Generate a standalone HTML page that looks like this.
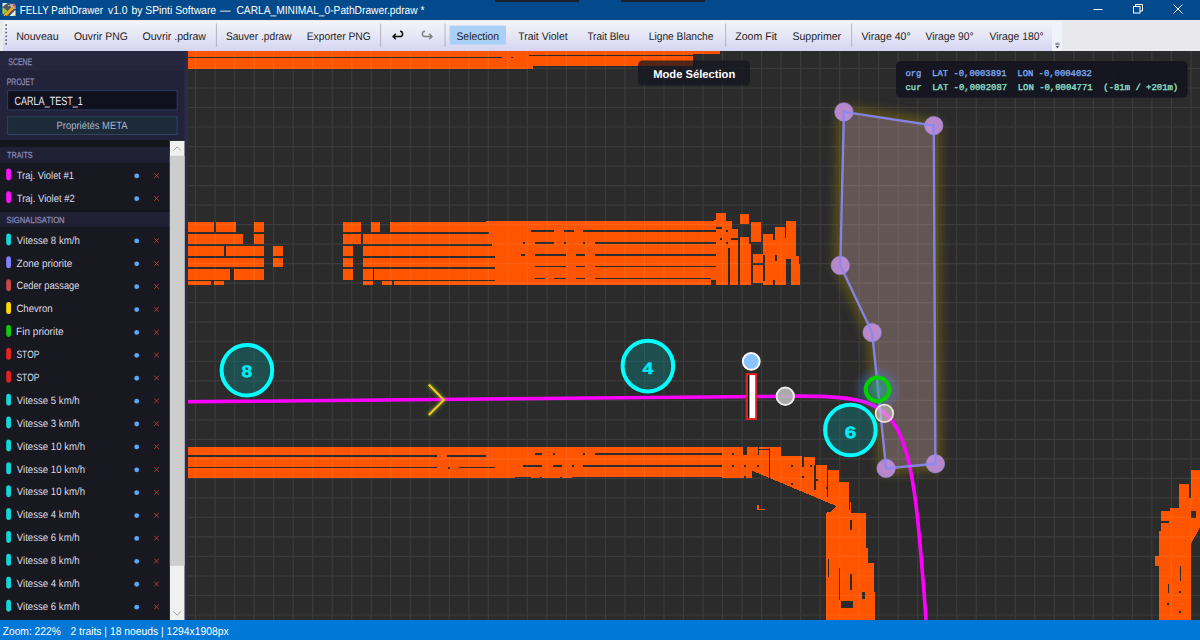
<!DOCTYPE html>
<html><head><meta charset="utf-8"><style>html,body{margin:0;padding:0;width:1200px;height:640px;overflow:hidden;background:#2b2b2b}svg{display:block}</style></head><body>
<svg width="1200" height="640" viewBox="0 0 1200 640" style="text-rendering:geometricPrecision">
<rect x="0.00" y="0.00" width="1200.00" height="20.00" fill="#024a8b"/>
<g transform="translate(2.5,3)">
<rect x="0" y="0" width="13" height="13" rx="1" fill="#505666"/>
<path d="M0 0 H5 L0 4Z" fill="#d0e4f8"/>
<path d="M7 1.5 L11 1 L13 3 L13 6 L9 5Z" fill="#a0d0f0"/>
<path d="M0 4 L5 8 L1 11 L0 11Z" fill="#98d040"/>
<path d="M13 7 L13 13 L7 13Z" fill="#e8f0e8"/>
<path d="M11 13 L13 11 L13 13Z" fill="#90c840"/>
<path d="M3 12 L11 4" stroke="#f8a818" stroke-width="2.6"/>
<path d="M5.5 2.5 L7 3" stroke="#e8d040" stroke-width="1.2"/>
<path d="M10.5 1.5 L13 4" stroke="#e85060" stroke-width="1.8"/>
<path d="M1.5 12.5 L4 10.5" stroke="#f0c020" stroke-width="1.2"/>
</g>
<text x="19.72" y="14.20" font-family="Liberation Sans" font-size="11.50" fill="#ffffff" textLength="83.20" lengthAdjust="spacingAndGlyphs" xml:space="preserve">FELLY PathDrawer</text>
<text x="108.00" y="14.20" font-family="Liberation Sans" font-size="11.50" fill="#ffffff" textLength="19.41" lengthAdjust="spacingAndGlyphs" xml:space="preserve">v1.0</text>
<text x="131.38" y="14.20" font-family="Liberation Sans" font-size="11.50" fill="#ffffff" textLength="84.74" lengthAdjust="spacingAndGlyphs" xml:space="preserve">by SPinti Software</text>
<text x="220.00" y="14.20" font-family="Liberation Sans" font-size="11.50" fill="#ffffff" textLength="10.50" lengthAdjust="spacingAndGlyphs" xml:space="preserve">—</text>
<text x="236.49" y="14.20" font-family="Liberation Sans" font-size="11.50" fill="#ffffff" textLength="187.97" lengthAdjust="spacingAndGlyphs" xml:space="preserve">CARLA_MINIMAL_0-PathDrawer.pdraw *</text>
<rect x="495.00" y="0.00" width="84.00" height="2.00" fill="#1a2030"/>
<rect x="621.00" y="0.00" width="84.00" height="2.00" fill="#1a2030"/>
<path d="M1093.5 9.5H1102.5" stroke="#fff" stroke-width="1"/>
<rect x="1133.5" y="6.5" width="6.5" height="6.5" fill="none" stroke="#fff" stroke-width="1"/>
<path d="M1135.5 6.5V4.5H1142.5V11H1140" fill="none" stroke="#fff" stroke-width="1"/>
<path d="M1173.5 4.5L1182.5 13.5M1182.5 4.5L1173.5 13.5" stroke="#fff" stroke-width="1"/>
<rect x="0.00" y="20.00" width="1200.00" height="31.00" fill="#e8e8ed"/>
<defs><linearGradient id="tbg" x1="0" y1="0" x2="0" y2="1"><stop offset="0" stop-color="#f4f4fa"/><stop offset="0.5" stop-color="#e6e6f6"/><stop offset="1" stop-color="#d4d4f2"/></linearGradient></defs>
<path d="M3 24 Q3 21 6 21 H1052 V51 H3Z" fill="url(#tbg)"/>
<path d="M1052 21 H1060 Q1062 21 1062 23 V49 Q1062 51 1060 51 H1052Z" fill="#eef3fc"/>
<path d="M1055.3 43.2H1059.6M1055.3 44.6H1059.6" stroke="#505050" stroke-width="0.7"/><path d="M1055.5 46L1057.45 48.3L1059.4 46Z" fill="#505050"/>
<rect x="5.40" y="24.30" width="1.50" height="1.50" fill="#4a4a5a"/>
<rect x="5.40" y="28.05" width="1.50" height="1.50" fill="#4a4a5a"/>
<rect x="5.40" y="31.80" width="1.50" height="1.50" fill="#4a4a5a"/>
<rect x="5.40" y="35.55" width="1.50" height="1.50" fill="#4a4a5a"/>
<rect x="5.40" y="39.30" width="1.50" height="1.50" fill="#4a4a5a"/>
<rect x="5.40" y="43.05" width="1.50" height="1.50" fill="#4a4a5a"/>
<rect x="449.60" y="25.60" width="56.40" height="19.00" fill="#aad0f6"/>
<text x="16.15" y="39.60" font-family="Liberation Sans" font-size="11.00" fill="#1e1e1e" textLength="42.52" lengthAdjust="spacingAndGlyphs" xml:space="preserve">Nouveau</text>
<text x="73.88" y="39.60" font-family="Liberation Sans" font-size="11.00" fill="#1e1e1e" textLength="53.92" lengthAdjust="spacingAndGlyphs" xml:space="preserve">Ouvrir PNG</text>
<text x="142.47" y="39.60" font-family="Liberation Sans" font-size="11.00" fill="#1e1e1e" textLength="63.54" lengthAdjust="spacingAndGlyphs" xml:space="preserve">Ouvrir .pdraw</text>
<text x="225.89" y="39.60" font-family="Liberation Sans" font-size="11.00" fill="#1e1e1e" textLength="65.68" lengthAdjust="spacingAndGlyphs" xml:space="preserve">Sauver .pdraw</text>
<text x="306.78" y="39.60" font-family="Liberation Sans" font-size="11.00" fill="#1e1e1e" textLength="63.98" lengthAdjust="spacingAndGlyphs" xml:space="preserve">Exporter PNG</text>
<text x="456.48" y="39.60" font-family="Liberation Sans" font-size="11.00" fill="#1e1e1e" textLength="42.58" lengthAdjust="spacingAndGlyphs" xml:space="preserve">Selection</text>
<text x="518.19" y="39.60" font-family="Liberation Sans" font-size="11.00" fill="#1e1e1e" textLength="49.45" lengthAdjust="spacingAndGlyphs" xml:space="preserve">Trait Violet</text>
<text x="587.40" y="39.60" font-family="Liberation Sans" font-size="11.00" fill="#1e1e1e" textLength="42.22" lengthAdjust="spacingAndGlyphs" xml:space="preserve">Trait Bleu</text>
<text x="648.78" y="39.60" font-family="Liberation Sans" font-size="11.00" fill="#1e1e1e" textLength="64.71" lengthAdjust="spacingAndGlyphs" xml:space="preserve">Ligne Blanche</text>
<text x="735.28" y="39.60" font-family="Liberation Sans" font-size="11.00" fill="#1e1e1e" textLength="41.77" lengthAdjust="spacingAndGlyphs" xml:space="preserve">Zoom Fit</text>
<text x="792.47" y="39.60" font-family="Liberation Sans" font-size="11.00" fill="#1e1e1e" textLength="48.66" lengthAdjust="spacingAndGlyphs" xml:space="preserve">Supprimer</text>
<text x="861.49" y="39.60" font-family="Liberation Sans" font-size="11.00" fill="#1e1e1e" textLength="49.16" lengthAdjust="spacingAndGlyphs" xml:space="preserve">Virage 40°</text>
<text x="925.50" y="39.60" font-family="Liberation Sans" font-size="11.00" fill="#1e1e1e" textLength="48.15" lengthAdjust="spacingAndGlyphs" xml:space="preserve">Virage 90°</text>
<text x="989.50" y="39.60" font-family="Liberation Sans" font-size="11.00" fill="#1e1e1e" textLength="54.11" lengthAdjust="spacingAndGlyphs" xml:space="preserve">Virage 180°</text>
<rect x="215.90" y="23.60" width="1.00" height="23.40" fill="#b4b4c4"/>
<rect x="380.10" y="23.60" width="1.00" height="23.40" fill="#b4b4c4"/>
<rect x="444.50" y="23.60" width="1.00" height="23.40" fill="#b4b4c4"/>
<rect x="725.10" y="23.60" width="1.00" height="23.40" fill="#b4b4c4"/>
<rect x="851.10" y="23.60" width="1.00" height="23.40" fill="#b4b4c4"/>
<path d="M400 31.3 A2.6 2.6 0 0 1 400 36.5 H393.2 M395.8 33.8 L393.1 36.5 L395.8 39.2" fill="none" stroke="#101010" stroke-width="1.5"/>
<path d="M425 31.3 A2.6 2.6 0 0 0 425 36.5 H432 M429.3 33.8 L432 36.5 L429.3 39.2" fill="none" stroke="#808080" stroke-width="1.4"/>
<rect x="0.00" y="620.00" width="1200.00" height="20.00" fill="#0078d7"/>
<text x="2.69" y="635.00" font-family="Liberation Sans" font-size="11.30" fill="#ffffff" textLength="58.11" lengthAdjust="spacingAndGlyphs" xml:space="preserve">Zoom: 222%</text>
<rect x="65.20" y="623.00" width="1.00" height="15.00" fill="#3a6a98"/>
<text x="70.48" y="635.00" font-family="Liberation Sans" font-size="11.30" fill="#ffffff" textLength="158.19" lengthAdjust="spacingAndGlyphs" xml:space="preserve">2 traits | 18 noeuds | 1294x1908px</text>
<rect x="0.00" y="51.00" width="188.00" height="569.00" fill="#181820"/>
<rect x="0.00" y="51.00" width="185.00" height="89.00" fill="#22223a"/>
<rect x="0.00" y="51.00" width="185.00" height="19.00" fill="#26263e"/>
<rect x="184.50" y="51.00" width="3.50" height="569.00" fill="#2c2c48"/>
<text x="8.25" y="64.50" font-family="Liberation Sans" font-size="9.60" fill="#8a8ab0" textLength="24.00" lengthAdjust="spacingAndGlyphs" xml:space="preserve" stroke="#8a8ab8" stroke-width="0.25">SCENE</text>
<text x="6.74" y="84.50" font-family="Liberation Sans" font-size="9.40" fill="#8a8ab8" textLength="27.43" lengthAdjust="spacingAndGlyphs" xml:space="preserve" stroke="#8a8ab8" stroke-width="0.25">PROJET</text>
<rect x="7.60" y="90.60" width="169.50" height="19.30" fill="#10101e" stroke="#2c3c5c" stroke-width="1"/>
<text x="14.55" y="104.80" font-family="Liberation Sans" font-size="12.00" fill="#e8e8f4" textLength="68.19" lengthAdjust="spacingAndGlyphs" xml:space="preserve">CARLA_TEST_1</text>
<rect x="7.60" y="116.80" width="169.50" height="17.70" fill="#1c2a3a" stroke="#2c4460" stroke-width="1"/>
<text x="56.55" y="129.00" font-family="Liberation Sans" font-size="10.60" fill="#a8b8cc" textLength="71.04" lengthAdjust="spacingAndGlyphs" xml:space="preserve">Propriétés META</text>
<rect x="0.00" y="140.00" width="170.00" height="7.00" fill="#15151b"/>
<rect x="0.00" y="147.00" width="170.00" height="15.70" fill="#212135"/>
<text x="7.06" y="158.00" font-family="Liberation Sans" font-size="8.80" fill="#8a8ab8" textLength="25.57" lengthAdjust="spacingAndGlyphs" xml:space="preserve" stroke="#8a8ab8" stroke-width="0.25">TRAITS</text>
<rect x="0.00" y="209.00" width="170.00" height="3.00" fill="#15151b"/>
<rect x="0.00" y="212.00" width="170.00" height="14.80" fill="#212135"/>
<text x="6.62" y="223.40" font-family="Liberation Sans" font-size="8.80" fill="#8a8ab8" textLength="58.03" lengthAdjust="spacingAndGlyphs" xml:space="preserve" stroke="#8a8ab8" stroke-width="0.25">SIGNALISATION</text>
<rect x="6.2" y="168.40" width="4.8" height="12" rx="2.4" fill="#ff10ff"/>
<text x="16.71" y="178.70" font-family="Liberation Sans" font-size="10.60" fill="#dcdce6" textLength="57.30" lengthAdjust="spacingAndGlyphs" xml:space="preserve">Traj. Violet #1</text>
<circle cx="136.7" cy="175.90" r="2.4" fill="#5aa8f8"/>
<path d="M154.20 173.30L158.80 177.90M158.80 173.30L154.20 177.90" stroke="#b03a3a" stroke-width="1"/>
<rect x="6.2" y="191.20" width="4.8" height="12" rx="2.4" fill="#ff10ff"/>
<text x="16.71" y="201.50" font-family="Liberation Sans" font-size="10.60" fill="#dcdce6" textLength="58.11" lengthAdjust="spacingAndGlyphs" xml:space="preserve">Traj. Violet #2</text>
<circle cx="136.7" cy="198.70" r="2.4" fill="#5aa8f8"/>
<path d="M154.20 196.10L158.80 200.70M158.80 196.10L154.20 200.70" stroke="#b03a3a" stroke-width="1"/>
<rect x="6.2" y="233.40" width="4.8" height="12" rx="2.4" fill="#10d8d8"/>
<text x="16.80" y="243.70" font-family="Liberation Sans" font-size="10.60" fill="#dcdce6" textLength="62.97" lengthAdjust="spacingAndGlyphs" xml:space="preserve">Vitesse 8 km/h</text>
<circle cx="136.7" cy="240.90" r="2.4" fill="#5aa8f8"/>
<path d="M154.20 238.30L158.80 242.90M158.80 238.30L154.20 242.90" stroke="#b03a3a" stroke-width="1"/>
<rect x="6.2" y="256.29" width="4.8" height="12" rx="2.4" fill="#8080ff"/>
<text x="16.60" y="266.59" font-family="Liberation Sans" font-size="10.60" fill="#dcdce6" textLength="55.73" lengthAdjust="spacingAndGlyphs" xml:space="preserve">Zone priorite</text>
<circle cx="136.7" cy="263.79" r="2.4" fill="#5aa8f8"/>
<path d="M154.20 261.19L158.80 265.79M158.80 261.19L154.20 265.79" stroke="#b03a3a" stroke-width="1"/>
<rect x="6.2" y="279.18" width="4.8" height="12" rx="2.4" fill="#c84848"/>
<text x="16.44" y="289.48" font-family="Liberation Sans" font-size="10.60" fill="#dcdce6" textLength="62.95" lengthAdjust="spacingAndGlyphs" xml:space="preserve">Ceder passage</text>
<circle cx="136.7" cy="286.68" r="2.4" fill="#5aa8f8"/>
<path d="M154.20 284.08L158.80 288.68M158.80 284.08L154.20 288.68" stroke="#b03a3a" stroke-width="1"/>
<rect x="6.2" y="302.07" width="4.8" height="12" rx="2.4" fill="#ffd800"/>
<text x="16.42" y="312.37" font-family="Liberation Sans" font-size="10.60" fill="#dcdce6" textLength="36.14" lengthAdjust="spacingAndGlyphs" xml:space="preserve">Chevron</text>
<circle cx="136.7" cy="309.57" r="2.4" fill="#5aa8f8"/>
<path d="M154.20 306.97L158.80 311.57M158.80 306.97L154.20 311.57" stroke="#b03a3a" stroke-width="1"/>
<rect x="6.2" y="324.96" width="4.8" height="12" rx="2.4" fill="#10c810"/>
<text x="16.10" y="335.26" font-family="Liberation Sans" font-size="10.60" fill="#dcdce6" textLength="47.44" lengthAdjust="spacingAndGlyphs" xml:space="preserve">Fin priorite</text>
<circle cx="136.7" cy="332.46" r="2.4" fill="#5aa8f8"/>
<path d="M154.20 329.86L158.80 334.46M158.80 329.86L154.20 334.46" stroke="#b03a3a" stroke-width="1"/>
<rect x="6.2" y="347.85" width="4.8" height="12" rx="2.4" fill="#e82020"/>
<text x="16.48" y="358.15" font-family="Liberation Sans" font-size="10.60" fill="#dcdce6" textLength="22.90" lengthAdjust="spacingAndGlyphs" xml:space="preserve">STOP</text>
<circle cx="136.7" cy="355.35" r="2.4" fill="#5aa8f8"/>
<path d="M154.20 352.75L158.80 357.35M158.80 352.75L154.20 357.35" stroke="#b03a3a" stroke-width="1"/>
<rect x="6.2" y="370.74" width="4.8" height="12" rx="2.4" fill="#e82020"/>
<text x="16.48" y="381.04" font-family="Liberation Sans" font-size="10.60" fill="#dcdce6" textLength="22.90" lengthAdjust="spacingAndGlyphs" xml:space="preserve">STOP</text>
<circle cx="136.7" cy="378.24" r="2.4" fill="#5aa8f8"/>
<path d="M154.20 375.64L158.80 380.24M158.80 375.64L154.20 380.24" stroke="#b03a3a" stroke-width="1"/>
<rect x="6.2" y="393.63" width="4.8" height="12" rx="2.4" fill="#10d8d8"/>
<text x="16.80" y="403.93" font-family="Liberation Sans" font-size="10.60" fill="#dcdce6" textLength="62.87" lengthAdjust="spacingAndGlyphs" xml:space="preserve">Vitesse 5 km/h</text>
<circle cx="136.7" cy="401.13" r="2.4" fill="#5aa8f8"/>
<path d="M154.20 398.53L158.80 403.13M158.80 398.53L154.20 403.13" stroke="#b03a3a" stroke-width="1"/>
<rect x="6.2" y="416.52" width="4.8" height="12" rx="2.4" fill="#10d8d8"/>
<text x="16.80" y="426.82" font-family="Liberation Sans" font-size="10.60" fill="#dcdce6" textLength="62.87" lengthAdjust="spacingAndGlyphs" xml:space="preserve">Vitesse 3 km/h</text>
<circle cx="136.7" cy="424.02" r="2.4" fill="#5aa8f8"/>
<path d="M154.20 421.42L158.80 426.02M158.80 421.42L154.20 426.02" stroke="#b03a3a" stroke-width="1"/>
<rect x="6.2" y="439.41" width="4.8" height="12" rx="2.4" fill="#10d8d8"/>
<text x="16.80" y="449.71" font-family="Liberation Sans" font-size="10.60" fill="#dcdce6" textLength="68.23" lengthAdjust="spacingAndGlyphs" xml:space="preserve">Vitesse 10 km/h</text>
<circle cx="136.7" cy="446.91" r="2.4" fill="#5aa8f8"/>
<path d="M154.20 444.31L158.80 448.91M158.80 444.31L154.20 448.91" stroke="#b03a3a" stroke-width="1"/>
<rect x="6.2" y="462.30" width="4.8" height="12" rx="2.4" fill="#10d8d8"/>
<text x="16.80" y="472.60" font-family="Liberation Sans" font-size="10.60" fill="#dcdce6" textLength="68.23" lengthAdjust="spacingAndGlyphs" xml:space="preserve">Vitesse 10 km/h</text>
<circle cx="136.7" cy="469.80" r="2.4" fill="#5aa8f8"/>
<path d="M154.20 467.20L158.80 471.80M158.80 467.20L154.20 471.80" stroke="#b03a3a" stroke-width="1"/>
<rect x="6.2" y="485.19" width="4.8" height="12" rx="2.4" fill="#10d8d8"/>
<text x="16.80" y="495.49" font-family="Liberation Sans" font-size="10.60" fill="#dcdce6" textLength="68.23" lengthAdjust="spacingAndGlyphs" xml:space="preserve">Vitesse 10 km/h</text>
<circle cx="136.7" cy="492.69" r="2.4" fill="#5aa8f8"/>
<path d="M154.20 490.09L158.80 494.69M158.80 490.09L154.20 494.69" stroke="#b03a3a" stroke-width="1"/>
<rect x="6.2" y="508.08" width="4.8" height="12" rx="2.4" fill="#10d8d8"/>
<text x="16.80" y="518.38" font-family="Liberation Sans" font-size="10.60" fill="#dcdce6" textLength="62.87" lengthAdjust="spacingAndGlyphs" xml:space="preserve">Vitesse 4 km/h</text>
<circle cx="136.7" cy="515.58" r="2.4" fill="#5aa8f8"/>
<path d="M154.20 512.98L158.80 517.58M158.80 512.98L154.20 517.58" stroke="#b03a3a" stroke-width="1"/>
<rect x="6.2" y="530.97" width="4.8" height="12" rx="2.4" fill="#10d8d8"/>
<text x="16.80" y="541.27" font-family="Liberation Sans" font-size="10.60" fill="#dcdce6" textLength="62.87" lengthAdjust="spacingAndGlyphs" xml:space="preserve">Vitesse 6 km/h</text>
<circle cx="136.7" cy="538.47" r="2.4" fill="#5aa8f8"/>
<path d="M154.20 535.87L158.80 540.47M158.80 535.87L154.20 540.47" stroke="#b03a3a" stroke-width="1"/>
<rect x="6.2" y="553.86" width="4.8" height="12" rx="2.4" fill="#10d8d8"/>
<text x="16.80" y="564.16" font-family="Liberation Sans" font-size="10.60" fill="#dcdce6" textLength="62.87" lengthAdjust="spacingAndGlyphs" xml:space="preserve">Vitesse 8 km/h</text>
<circle cx="136.7" cy="561.36" r="2.4" fill="#5aa8f8"/>
<path d="M154.20 558.76L158.80 563.36M158.80 558.76L154.20 563.36" stroke="#b03a3a" stroke-width="1"/>
<rect x="6.2" y="576.75" width="4.8" height="12" rx="2.4" fill="#10d8d8"/>
<text x="16.80" y="587.05" font-family="Liberation Sans" font-size="10.60" fill="#dcdce6" textLength="62.87" lengthAdjust="spacingAndGlyphs" xml:space="preserve">Vitesse 4 km/h</text>
<circle cx="136.7" cy="584.25" r="2.4" fill="#5aa8f8"/>
<path d="M154.20 581.65L158.80 586.25M158.80 581.65L154.20 586.25" stroke="#b03a3a" stroke-width="1"/>
<rect x="6.2" y="599.64" width="4.8" height="12" rx="2.4" fill="#10d8d8"/>
<text x="16.80" y="609.94" font-family="Liberation Sans" font-size="10.60" fill="#dcdce6" textLength="62.87" lengthAdjust="spacingAndGlyphs" xml:space="preserve">Vitesse 6 km/h</text>
<circle cx="136.7" cy="607.14" r="2.4" fill="#5aa8f8"/>
<path d="M154.20 604.54L158.80 609.14M158.80 604.54L154.20 609.14" stroke="#b03a3a" stroke-width="1"/>
<rect x="169.90" y="140.90" width="14.60" height="479.10" fill="#f0f0f0"/>
<rect x="169.90" y="155.80" width="14.60" height="410.00" fill="#cdcdcd"/>
<path d="M173.5 150.5L177.2 146.8L180.9 150.5" fill="none" stroke="#a0a0a0" stroke-width="1"/>
<path d="M173.5 611.5L177.2 615.2L180.9 611.5" fill="none" stroke="#a0a0a0" stroke-width="1"/>
<defs><clipPath id="cv"><rect x="188" y="51" width="1012" height="569"/></clipPath><filter id="glowY" x="-30%" y="-30%" width="160%" height="160%"><feGaussianBlur stdDeviation="6"/></filter><filter id="blur2" x="-50%" y="-50%" width="200%" height="200%"><feGaussianBlur stdDeviation="1.5"/></filter><radialGradient id="blueGlow"><stop offset="0" stop-color="#4a90ff" stop-opacity="0.6"/><stop offset="1" stop-color="#4a90ff" stop-opacity="0"/></radialGradient></defs>
<g clip-path="url(#cv)">
<rect x="188.00" y="51.00" width="1012.00" height="569.00" fill="#2b2b2b"/>
<g shape-rendering="crispEdges">
<rect x="188.00" y="51.00" width="344.50" height="17.60" fill="#ff5500"/>
<rect x="532.50" y="51.00" width="160.50" height="15.00" fill="#ff5500"/>
<rect x="693.00" y="51.00" width="27.00" height="3.40" fill="#ff5500"/>
<rect x="188.00" y="56.50" width="313.50" height="1.20" fill="#2b2b2b"/>
<rect x="511.00" y="56.50" width="2.00" height="1.50" fill="#2b2b2b"/>
<rect x="529.00" y="54.50" width="191.00" height="1.50" fill="#2b2b2b"/>
<rect x="188.00" y="222.20" width="26.40" height="9.80" fill="#ff5500"/>
<rect x="216.00" y="222.20" width="19.50" height="9.80" fill="#ff5500"/>
<rect x="254.00" y="222.20" width="9.80" height="9.80" fill="#ff5500"/>
<rect x="188.00" y="233.80" width="55.40" height="10.60" fill="#ff5500"/>
<rect x="254.00" y="233.80" width="9.80" height="10.60" fill="#ff5500"/>
<rect x="188.00" y="245.80" width="36.00" height="10.10" fill="#ff5500"/>
<rect x="225.80" y="245.80" width="38.00" height="10.10" fill="#ff5500"/>
<rect x="273.00" y="245.80" width="10.10" height="10.10" fill="#ff5500"/>
<rect x="188.00" y="257.50" width="75.80" height="9.70" fill="#ff5500"/>
<rect x="273.00" y="257.50" width="10.10" height="9.70" fill="#ff5500"/>
<rect x="188.00" y="269.00" width="42.00" height="10.60" fill="#ff5500"/>
<rect x="233.80" y="269.00" width="30.00" height="10.60" fill="#ff5500"/>
<rect x="188.00" y="281.00" width="23.00" height="3.90" fill="#ff5500"/>
<rect x="214.10" y="281.00" width="9.90" height="3.90" fill="#ff5500"/>
<rect x="343.40" y="222.20" width="17.60" height="9.80" fill="#ff5500"/>
<rect x="370.80" y="222.20" width="9.40" height="9.80" fill="#ff5500"/>
<rect x="343.40" y="233.80" width="17.60" height="10.60" fill="#ff5500"/>
<rect x="343.40" y="245.80" width="9.50" height="10.10" fill="#ff5500"/>
<rect x="343.40" y="257.50" width="9.50" height="9.70" fill="#ff5500"/>
<rect x="343.40" y="269.00" width="9.50" height="10.60" fill="#ff5500"/>
<rect x="362.80" y="269.00" width="9.70" height="10.60" fill="#ff5500"/>
<rect x="362.80" y="281.00" width="9.70" height="3.90" fill="#ff5500"/>
<rect x="382.00" y="281.00" width="9.90" height="3.90" fill="#ff5500"/>
<rect x="362.80" y="233.80" width="27.20" height="35.10" fill="#ff5500"/>
<rect x="390.00" y="222.20" width="96.00" height="57.40" fill="#ff5500"/>
<rect x="486.00" y="220.80" width="228.00" height="64.10" fill="#ff5500"/>
<rect x="486.00" y="279.60" width="9.30" height="1.40" fill="#ff5500"/>
<rect x="374.00" y="269.00" width="16.00" height="10.60" fill="#ff5500"/>
<rect x="394.30" y="281.00" width="91.70" height="3.90" fill="#ff5500"/>
<rect x="714.00" y="220.30" width="4.00" height="59.20" fill="#ff5500"/>
<rect x="362.80" y="232.10" width="126.30" height="1.60" fill="#2b2b2b"/>
<rect x="362.80" y="244.30" width="129.10" height="1.60" fill="#2b2b2b"/>
<rect x="362.80" y="256.00" width="132.50" height="1.60" fill="#2b2b2b"/>
<rect x="362.80" y="267.20" width="132.50" height="1.60" fill="#2b2b2b"/>
<rect x="390.00" y="279.70" width="105.30" height="1.20" fill="#2b2b2b"/>
<rect x="530.90" y="230.20" width="23.20" height="1.60" fill="#2b2b2b"/>
<rect x="564.00" y="230.20" width="9.50" height="1.60" fill="#2b2b2b"/>
<rect x="583.40" y="230.20" width="132.60" height="1.60" fill="#2b2b2b"/>
<rect x="535.10" y="242.20" width="19.00" height="1.60" fill="#2b2b2b"/>
<rect x="595.00" y="242.20" width="121.00" height="1.60" fill="#2b2b2b"/>
<rect x="522.50" y="242.00" width="2.00" height="2.00" fill="#2b2b2b"/>
<rect x="564.00" y="242.00" width="2.00" height="2.00" fill="#2b2b2b"/>
<rect x="583.00" y="242.00" width="2.00" height="2.00" fill="#2b2b2b"/>
<rect x="521.00" y="254.20" width="3.50" height="1.60" fill="#2b2b2b"/>
<rect x="535.10" y="254.20" width="30.80" height="1.60" fill="#2b2b2b"/>
<rect x="575.60" y="254.20" width="9.40" height="1.60" fill="#2b2b2b"/>
<rect x="595.00" y="254.20" width="121.00" height="1.60" fill="#2b2b2b"/>
<rect x="535.10" y="265.50" width="30.80" height="1.60" fill="#2b2b2b"/>
<rect x="575.60" y="265.50" width="9.40" height="1.60" fill="#2b2b2b"/>
<rect x="595.00" y="265.50" width="123.00" height="1.60" fill="#2b2b2b"/>
<rect x="535.10" y="277.50" width="9.50" height="1.60" fill="#2b2b2b"/>
<rect x="554.10" y="277.50" width="11.80" height="1.60" fill="#2b2b2b"/>
<rect x="575.60" y="277.50" width="9.40" height="1.60" fill="#2b2b2b"/>
<rect x="595.00" y="277.50" width="116.00" height="1.60" fill="#2b2b2b"/>
<rect x="711.00" y="279.50" width="7.00" height="5.50" fill="#2b2b2b"/>
<rect x="715.90" y="212.70" width="9.70" height="72.00" fill="#ff5500"/>
<rect x="725.60" y="220.70" width="6.00" height="26.80" fill="#ff5500"/>
<rect x="731.60" y="228.60" width="5.90" height="18.90" fill="#ff5500"/>
<rect x="730.20" y="247.50" width="8.00" height="37.20" fill="#ff5500"/>
<rect x="725.60" y="247.50" width="2.60" height="37.20" fill="#ff5500"/>
<rect x="739.80" y="214.30" width="9.20" height="9.30" fill="#ff5500"/>
<rect x="739.80" y="236.60" width="9.20" height="6.90" fill="#ff5500"/>
<rect x="740.20" y="243.50" width="10.60" height="41.20" fill="#ff5500"/>
<rect x="750.80" y="222.30" width="10.00" height="19.20" fill="#ff5500"/>
<rect x="752.80" y="254.10" width="10.60" height="28.60" fill="#ff5500"/>
<rect x="752.80" y="263.40" width="10.60" height="2.00" fill="#2b2b2b"/>
<rect x="763.20" y="233.50" width="9.70" height="51.20" fill="#ff5500"/>
<rect x="763.20" y="255.40" width="1.80" height="25.90" fill="#2b2b2b"/>
<rect x="774.90" y="226.90" width="9.60" height="57.80" fill="#ff5500"/>
<rect x="772.90" y="239.80" width="2.00" height="44.90" fill="#ff5500"/>
<rect x="774.90" y="255.40" width="2.00" height="6.00" fill="#2b2b2b"/>
<rect x="772.90" y="280.00" width="2.00" height="4.70" fill="#2b2b2b"/>
<rect x="784.50" y="237.50" width="1.70" height="47.20" fill="#ff5500"/>
<rect x="786.20" y="220.70" width="9.70" height="38.70" fill="#ff5500"/>
<rect x="790.60" y="256.10" width="8.20" height="28.60" fill="#ff5500"/>
<rect x="798.80" y="264.10" width="1.20" height="20.60" fill="#ff5500"/>
<rect x="715.60" y="227.30" width="6.70" height="1.30" fill="#2b2b2b"/>
<rect x="725.90" y="229.90" width="2.00" height="2.00" fill="#2b2b2b"/>
<rect x="720.00" y="237.90" width="2.00" height="2.00" fill="#2b2b2b"/>
<rect x="725.90" y="241.80" width="2.00" height="2.00" fill="#2b2b2b"/>
<rect x="727.90" y="253.80" width="2.00" height="2.00" fill="#2b2b2b"/>
<rect x="730.90" y="238.30" width="7.30" height="1.20" fill="#2b2b2b"/>
<rect x="728.20" y="265.40" width="2.00" height="19.30" fill="#2b2b2b"/>
<rect x="188.00" y="447.30" width="384.00" height="30.80" fill="#ff5500"/>
<rect x="572.00" y="447.30" width="179.50" height="29.20" fill="#ff5500"/>
<rect x="721.80" y="447.30" width="29.50" height="30.70" fill="#ff5500"/>
<rect x="188.00" y="455.30" width="248.50" height="1.80" fill="#2b2b2b"/>
<rect x="447.25" y="455.30" width="38.35" height="1.80" fill="#2b2b2b"/>
<rect x="188.00" y="466.60" width="248.50" height="1.80" fill="#2b2b2b"/>
<rect x="447.50" y="466.60" width="2.00" height="1.90" fill="#2b2b2b"/>
<rect x="458.75" y="466.60" width="36.25" height="1.80" fill="#2b2b2b"/>
<rect x="535.00" y="453.20" width="6.90" height="1.60" fill="#2b2b2b"/>
<rect x="553.00" y="453.00" width="2.00" height="2.00" fill="#2b2b2b"/>
<rect x="522.75" y="465.10" width="19.15" height="1.60" fill="#2b2b2b"/>
<rect x="552.50" y="465.10" width="9.40" height="1.60" fill="#2b2b2b"/>
<rect x="515.00" y="477.00" width="15.60" height="1.20" fill="#2b2b2b"/>
<rect x="540.00" y="477.00" width="2.00" height="1.20" fill="#2b2b2b"/>
<rect x="560.00" y="477.00" width="2.00" height="1.20" fill="#2b2b2b"/>
<rect x="595.00" y="453.20" width="126.80" height="1.60" fill="#2b2b2b"/>
<rect x="583.00" y="453.00" width="2.00" height="2.00" fill="#2b2b2b"/>
<rect x="583.30" y="464.90" width="138.50" height="1.60" fill="#2b2b2b"/>
<rect x="572.00" y="464.70" width="2.00" height="2.00" fill="#2b2b2b"/>
<rect x="759.00" y="447.00" width="10.00" height="2.00" fill="#2b2b2b"/>
<path d="M721.8 447.3 L781 447.3 L781 455.5 L802.2 455.5 L802.2 456.9 L814.5 456.9 L814.5 465.2 L827.3 465.2 L827.3 469.8 L839.2 469.8 L839.2 482.2 L848.8 482.2 L848.8 502 L851.2 502 L851.2 512.8 L826 512.8 L830.8 511.7 L836.4 506.1 L751.5 470.5 L751.5 478 L721.8 478 Z" fill="#ff5500"/>
<rect x="743.00" y="447.00" width="4.00" height="8.00" fill="#2b2b2b"/>
<rect x="757.70" y="447.00" width="1.30" height="8.00" fill="#2b2b2b"/>
<rect x="759.00" y="448.80" width="10.00" height="1.20" fill="#2b2b2b"/>
<rect x="768.50" y="447.50" width="1.80" height="30.50" fill="#2b2b2b"/>
<rect x="802.00" y="456.00" width="2.00" height="10.70" fill="#2b2b2b"/>
<rect x="814.00" y="465.00" width="1.50" height="25.00" fill="#2b2b2b"/>
<rect x="826.80" y="470.00" width="1.50" height="27.00" fill="#2b2b2b"/>
<rect x="838.70" y="482.00" width="1.50" height="20.00" fill="#2b2b2b"/>
<rect x="848.50" y="502.00" width="1.50" height="8.00" fill="#2b2b2b"/>
<rect x="731.50" y="453.00" width="2.00" height="2.00" fill="#2b2b2b"/>
<rect x="731.50" y="465.00" width="2.00" height="2.00" fill="#2b2b2b"/>
<rect x="743.50" y="465.00" width="2.00" height="2.00" fill="#2b2b2b"/>
<rect x="757.00" y="465.00" width="2.00" height="2.00" fill="#2b2b2b"/>
<rect x="743.50" y="476.00" width="2.00" height="2.00" fill="#2b2b2b"/>
<rect x="790.50" y="465.00" width="2.00" height="2.00" fill="#2b2b2b"/>
<rect x="802.00" y="476.00" width="2.00" height="2.00" fill="#2b2b2b"/>
<rect x="790.50" y="482.50" width="2.00" height="2.00" fill="#2b2b2b"/>
<rect x="785.00" y="449.00" width="2.00" height="2.00" fill="#2b2b2b"/>
<rect x="810.00" y="465.00" width="2.00" height="2.00" fill="#2b2b2b"/>
<rect x="816.00" y="479.00" width="2.00" height="2.00" fill="#2b2b2b"/>
<rect x="826.00" y="487.00" width="2.00" height="2.00" fill="#2b2b2b"/>
<rect x="838.60" y="482.30" width="10.60" height="30.50" fill="#ff5500"/>
<rect x="825.80" y="512.80" width="38.60" height="107.20" fill="#ff5500"/>
<rect x="864.40" y="512.80" width="1.20" height="35.20" fill="#ff5500"/>
<rect x="864.40" y="548.00" width="4.00" height="15.00" fill="#ff5500"/>
<rect x="864.40" y="563.00" width="9.40" height="57.00" fill="#ff5500"/>
<rect x="873.80" y="592.00" width="1.60" height="28.00" fill="#ff5500"/>
<rect x="827.60" y="558.50" width="1.40" height="18.50" fill="#2b2b2b"/>
<rect x="838.60" y="568.00" width="1.40" height="32.00" fill="#2b2b2b"/>
<rect x="850.40" y="520.00" width="1.60" height="10.00" fill="#2b2b2b"/>
<rect x="850.40" y="573.70" width="1.60" height="16.30" fill="#2b2b2b"/>
<rect x="841.00" y="600.60" width="11.70" height="7.00" fill="#2b2b2b"/>
<rect x="862.00" y="592.00" width="3.00" height="7.00" fill="#2b2b2b"/>
<rect x="757.00" y="505.00" width="2.00" height="5.00" fill="#ff5500"/>
<rect x="757.00" y="508.50" width="8.00" height="1.50" fill="#ff5500"/>
<rect x="1190.50" y="470.00" width="9.50" height="57.50" fill="#ff5500"/>
<path d="M1190.5 527 L1200 527 L1190.5 545Z" fill="#ff5500"/>
<rect x="1178.75" y="483.75" width="11.75" height="136.25" fill="#ff5500"/>
<rect x="1161.25" y="511.25" width="28.75" height="108.75" fill="#ff5500"/>
<rect x="1170.00" y="507.50" width="8.75" height="4.50" fill="#ff5500"/>
<rect x="1158.75" y="531.00" width="2.50" height="89.00" fill="#ff5500"/>
<rect x="1155.00" y="556.00" width="3.75" height="10.00" fill="#ff5500"/>
<rect x="1188.75" y="470.00" width="1.75" height="27.50" fill="#2b2b2b"/>
<rect x="1190.50" y="511.00" width="5.50" height="6.50" fill="#2b2b2b"/>
<rect x="1161.00" y="521.25" width="7.75" height="1.25" fill="#2b2b2b"/>
<rect x="1179.50" y="566.00" width="1.50" height="15.00" fill="#2b2b2b"/>
<rect x="1167.50" y="583.75" width="1.50" height="8.75" fill="#2b2b2b"/>
<rect x="1167.00" y="603.00" width="2.00" height="2.00" fill="#2b2b2b"/>
<rect x="1179.00" y="591.00" width="2.00" height="2.00" fill="#2b2b2b"/>
<rect x="1179.00" y="611.00" width="2.00" height="2.00" fill="#2b2b2b"/>
</g>
<path d="M195.60 51V620 M215.12 51V620 M234.63 51V620 M254.15 51V620 M273.66 51V620 M293.18 51V620 M312.70 51V620 M332.21 51V620 M351.73 51V620 M371.24 51V620 M390.76 51V620 M410.28 51V620 M429.79 51V620 M449.31 51V620 M468.82 51V620 M488.34 51V620 M507.86 51V620 M527.37 51V620 M546.89 51V620 M566.40 51V620 M585.92 51V620 M605.44 51V620 M624.95 51V620 M644.47 51V620 M663.98 51V620 M683.50 51V620 M703.02 51V620 M722.53 51V620 M742.05 51V620 M761.56 51V620 M781.08 51V620 M800.60 51V620 M820.11 51V620 M839.63 51V620 M859.14 51V620 M878.66 51V620 M898.18 51V620 M917.69 51V620 M937.21 51V620 M956.72 51V620 M976.24 51V620 M995.76 51V620 M1015.27 51V620 M1034.79 51V620 M1054.30 51V620 M1073.82 51V620 M1093.34 51V620 M1112.85 51V620 M1132.37 51V620 M1151.88 51V620 M1171.40 51V620 M1190.92 51V620 M188 68.46H1200 M188 87.98H1200 M188 107.50H1200 M188 127.02H1200 M188 146.54H1200 M188 166.06H1200 M188 185.58H1200 M188 205.10H1200 M188 224.62H1200 M188 244.14H1200 M188 263.66H1200 M188 283.18H1200 M188 302.70H1200 M188 322.22H1200 M188 341.74H1200 M188 361.26H1200 M188 380.78H1200 M188 400.30H1200 M188 419.82H1200 M188 439.34H1200 M188 458.86H1200 M188 478.38H1200 M188 497.90H1200 M188 517.42H1200 M188 536.94H1200 M188 556.46H1200 M188 575.98H1200 M188 595.50H1200 M188 615.02H1200" stroke="#ffffff" stroke-opacity="0.08" stroke-width="1.2"/>
<mask id="outpoly" maskUnits="userSpaceOnUse" x="188" y="51" width="1012" height="569"><rect x="188" y="51" width="1012" height="569" fill="#fff"/><polygon points="843.9,111.9 933.8,125.6 935.4,463.8 886.1,468.4 872.1,332.6 840.3,265.4" fill="#000"/></mask>
<g mask="url(#outpoly)"><polygon points="843.9,111.9 933.8,125.6 935.4,463.8 886.1,468.4 872.1,332.6 840.3,265.4" fill="none" stroke="#a88c00" stroke-opacity="0.5" stroke-width="10" filter="url(#glowY)"/></g>
<polygon points="843.9,111.9 933.8,125.6 935.4,463.8 886.1,468.4 872.1,332.6 840.3,265.4" fill="#ffc8c8" fill-opacity="0.27"/>
<path d="M188 401.8 L800 396.1 C909.7 395.9 910.8 410.1 927.6 640" fill="none" stroke="#ff00ff" stroke-width="3.6"/>
<circle cx="246.9" cy="370.2" r="25.3" fill="#00a0a0" fill-opacity="0.3" stroke="#00ffff" stroke-width="4"/>
<text x="241.42" y="377.10" font-family="Liberation Sans" font-size="16.50" font-weight="bold" fill="#00eaf2" textLength="10.68" lengthAdjust="spacingAndGlyphs" xml:space="preserve" stroke="#00eaf2" stroke-width="0.5">8</text>
<circle cx="647.9" cy="366.1" r="25.3" fill="#00a0a0" fill-opacity="0.3" stroke="#00ffff" stroke-width="4"/>
<text x="642.56" y="374.00" font-family="Liberation Sans" font-size="16.50" font-weight="bold" fill="#00eaf2" textLength="10.66" lengthAdjust="spacingAndGlyphs" xml:space="preserve" stroke="#00eaf2" stroke-width="0.5">4</text>
<circle cx="850.4" cy="430" r="25.3" fill="#00a0a0" fill-opacity="0.3" stroke="#00ffff" stroke-width="4"/>
<text x="844.77" y="438.10" font-family="Liberation Sans" font-size="16.50" font-weight="bold" fill="#00eaf2" textLength="11.59" lengthAdjust="spacingAndGlyphs" xml:space="preserve" stroke="#00eaf2" stroke-width="0.5">6</text>
<path d="M428.75 384.5 L443.75 400 L428.75 415" fill="none" stroke="#a0d020" stroke-opacity="0.35" stroke-width="5" filter="url(#blur2)"/>
<path d="M428.75 384.5 L443.75 400 L428.75 415" fill="none" stroke="#f0c818" stroke-width="2.2"/>
<circle cx="751.25" cy="361.4" r="8.4" fill="#88c4ff" stroke="#ffffff" stroke-width="2"/>
<rect x="746.6" y="374.1" width="9.6" height="45" fill="#ffffff" stroke="#d42020" stroke-width="2"/>
<rect x="747.60" y="375.10" width="1.80" height="43.00" fill="#000000"/>
<circle cx="785.3" cy="396.25" r="8.7" fill="#b4b4b4" fill-opacity="0.92" stroke="#ececec" stroke-width="2"/>
<circle cx="877.5" cy="389.4" r="25" fill="url(#blueGlow)"/>
<circle cx="843.9" cy="111.9" r="9.2" fill="#c892e0" fill-opacity="0.88" stroke="#9a90f4" stroke-opacity="0.6" stroke-width="1"/>
<circle cx="933.8" cy="125.6" r="9.2" fill="#c892e0" fill-opacity="0.88" stroke="#9a90f4" stroke-opacity="0.6" stroke-width="1"/>
<circle cx="935.4" cy="463.8" r="9.2" fill="#c892e0" fill-opacity="0.88" stroke="#9a90f4" stroke-opacity="0.6" stroke-width="1"/>
<circle cx="886.1" cy="468.4" r="9.2" fill="#c892e0" fill-opacity="0.88" stroke="#9a90f4" stroke-opacity="0.6" stroke-width="1"/>
<circle cx="872.1" cy="332.6" r="9.2" fill="#c892e0" fill-opacity="0.88" stroke="#9a90f4" stroke-opacity="0.6" stroke-width="1"/>
<circle cx="840.3" cy="265.4" r="9.2" fill="#c892e0" fill-opacity="0.88" stroke="#9a90f4" stroke-opacity="0.6" stroke-width="1"/>
<polygon points="843.9,111.9 933.8,125.6 935.4,463.8 886.1,468.4 872.1,332.6 840.3,265.4" fill="none" stroke="#8888f4" stroke-opacity="0.9" stroke-width="2.4"/>
<circle cx="877.5" cy="389.4" r="11.8" fill="#00c000" fill-opacity="0.25" stroke="#00d000" stroke-width="4"/>
<circle cx="884.4" cy="413.4" r="8.8" fill="#d8d0d0" fill-opacity="0.55" stroke="#e8e4d8" stroke-width="1.8"/>
<rect x="638.1" y="60.4" width="111.9" height="25.1" rx="4.5" fill="#141420" fill-opacity="0.74"/>
<text x="653.22" y="78.00" font-family="Liberation Sans" font-size="11.40" font-weight="bold" fill="#ffffff" textLength="82.00" lengthAdjust="spacingAndGlyphs" xml:space="preserve">Mode Sélection</text>
<rect x="896" y="61" width="291.7" height="36.7" rx="5" fill="#141420" fill-opacity="0.9"/>
<text x="905.47" y="76.00" font-family="Liberation Mono" font-size="8.90" fill="#80aefc" textLength="186.41" lengthAdjust="spacingAndGlyphs" xml:space="preserve" stroke="#80aefc" stroke-width="0.3">org  LAT -0,0003891  LON -0,0004032</text>
<text x="905.47" y="90.00" font-family="Liberation Mono" font-size="8.90" fill="#92e4d4" textLength="272.73" lengthAdjust="spacingAndGlyphs" xml:space="preserve" stroke="#92e4d4" stroke-width="0.3">cur  LAT -0,0002087  LON -0,0004771  (-81m / +201m)</text>
</g>
</svg></body></html>
